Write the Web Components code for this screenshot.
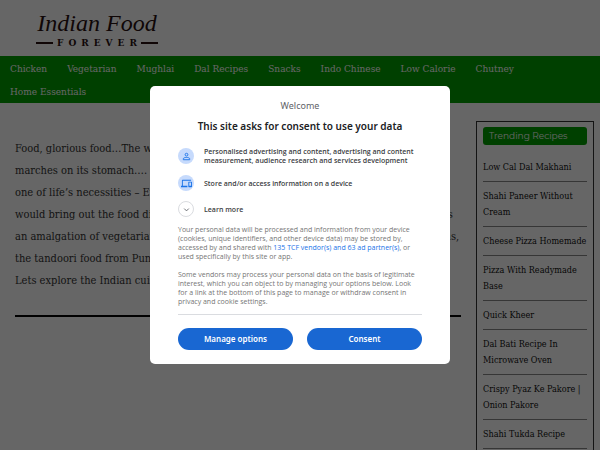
<!DOCTYPE html>
<html lang="en">
<head>
<meta charset="utf-8">
<meta name="viewport" content="width=device-width, initial-scale=1">
<title>Indian Food Forever</title>
<style>
  body {
    margin: 0;
    overflow: hidden; /* no scroll while the dialog is open */
    background: #fff;
    color: #333;
    font-family: "Roboto Slab", "DejaVu Serif Condensed", "DejaVu Serif", serif;
  }
</style>
</head>
<body>

<site-logo><span slot="name">Indian Food</span>Forever</site-logo>

<site-nav>
  <nav-item>Chicken</nav-item>
  <nav-item>Vegetarian</nav-item>
  <nav-item>Mughlai</nav-item>
  <nav-item>Dal Recipes</nav-item>
  <nav-item>Snacks</nav-item>
  <nav-item>Indo Chinese</nav-item>
  <nav-item>Low Calorie</nav-item>
  <nav-item>Chutney</nav-item>
  <nav-item>Home Essentials</nav-item>
</site-nav>

<page-layout>
  <intro-text>
    Food, glorious food…The way to a man’s heart, and an army<br>
    marches on its stomach…. Food is a passion, and it is also<br>
    one of life’s necessities – Every region and every festival<br>
    would bring out the food diversity of the country in all of its grandeur. Indian cuisine is<br>
    an amalgation of vegetarian recipes from the southern states and of the coastal regions,<br>
    the tandoori food from Punjab and the sweets of Bengal.<br>
    Lets explore the Indian cuisine with our recipes.
  </intro-text>
  <recipe-list slot="side" heading="Trending Recipes">
    <recipe-item>Low Cal Dal Makhani</recipe-item>
    <recipe-item>Shahi Paneer Without Cream</recipe-item>
    <recipe-item>Cheese Pizza Homemade</recipe-item>
    <recipe-item>Pizza With Readymade Base</recipe-item>
    <recipe-item>Quick Kheer</recipe-item>
    <recipe-item>Dal Bati Recipe In Microwave Oven</recipe-item>
    <recipe-item>Crispy Pyaz Ke Pakore | Onion Pakore</recipe-item>
    <recipe-item>Shahi Tukda Recipe</recipe-item>
  </recipe-list>
</page-layout>

<consent-dialog>
  <span slot="welcome">Welcome</span>
  <span slot="title">This site asks for consent to use your data</span>
  <consent-row icon="person">Personalised advertising and content, advertising and content measurement, audience research and services development</consent-row>
  <consent-row icon="devices">Store and/or access information on a device</consent-row>
  <consent-row icon="more">Learn more</consent-row>
  <consent-note slot="note">Your personal data will be processed and information from your device (cookies, unique identifiers, and other device data) may be stored by, accessed by and shared with <a href="#vendors">135 TCF vendor(s) and 63 ad partner(s)</a>, or used specifically by this site or app.</consent-note>
  <consent-note slot="note">Some vendors may process your personal data on the basis of legitimate interest, which you can object to by managing your options below. Look for a link at the bottom of this page to manage or withdraw consent in privacy and cookie settings.</consent-note>
  <pill-button slot="action">Manage options</pill-button>
  <pill-button slot="action">Consent</pill-button>
</consent-dialog>

<script>
// => Small helper: open shadow root with the given markup
function shadow(el, html) {
  el.attachShadow({ mode: 'open' }).innerHTML = html;
}

// **********************************************************************
// => Header

customElements.define('site-logo', class extends HTMLElement {
  constructor() {
    super();
    shadow(this, `
      <style>
        :host { display: flex; height: 56px; padding-left: 36px; color: #2a1010; }
        a { display: flex; flex-direction: column; align-items: center; width: 122px; padding-top: 8px; color: inherit; text-decoration: none; }
        .name { font: italic 24px/30px "Liberation Serif", serif; white-space: nowrap; }
        .sub { display: flex; align-items: center; gap: 4px; align-self: stretch; font: bold 9px/10px "DejaVu Serif", serif; text-transform: uppercase; letter-spacing: 5px; }
        .sub::before, .sub::after { content: ""; flex: 1; height: 2px; background: currentColor; }
        .sub::after { margin-left: -5px; }
      </style>
      <a href="#home">
        <span class="name"><slot name="name"></slot></span>
        <span class="sub"><span><slot></slot></span></span>
      </a>`);
  }
});

customElements.define('site-nav', class extends HTMLElement {
  constructor() {
    super();
    shadow(this, `
      <style>
        :host { display: block; background: #00a000; }
        nav { display: flex; flex-wrap: wrap; column-gap: 20px; padding: 1px 10px 0; }
      </style>
      <nav><slot></slot></nav>`);
  }
});

customElements.define('nav-item', class extends HTMLElement {
  constructor() {
    super();
    shadow(this, `
      <style>
        :host { display: block; font-size: 10px; line-height: 23px; }
        a { color: #fff; text-decoration: none; white-space: nowrap; }
      </style>
      <a href="#"><slot></slot></a>`);
  }
});

// **********************************************************************
// => Content and sidebar

customElements.define('page-layout', class extends HTMLElement {
  constructor() {
    super();
    shadow(this, `
      <style>
        :host { display: grid; grid-template-columns: minmax(0, 1fr) 118px; gap: 15px; align-items: start; padding: 18px 6px 0 15px; }
      </style>
      <main><slot></slot></main>
      <aside><slot name="side"></slot></aside>`);
  }
});

customElements.define('intro-text', class extends HTMLElement {
  constructor() {
    super();
    shadow(this, `
      <style>
        :host { display: block; padding-top: 17px; }
        p { margin: 0; font-size: 11px; line-height: 22px; white-space: nowrap; }
        hr { margin: 23px 0 0; border: 0; height: 2px; background: #000; }
      </style>
      <p><slot></slot></p>
      <hr>`);
  }
});

customElements.define('recipe-list', class extends HTMLElement {
  constructor() {
    super();
    shadow(this, `
      <style>
        :host { display: block; border: 1px solid #333; padding: 5px 6px; }
        h2 { margin: 0 0 8px; padding: 0 6px; border-radius: 3px; background: #00a000; color: #fff; font: 9px/18px Montserrat, Inter, sans-serif; white-space: nowrap; }
      </style>
      <h2>${this.getAttribute('heading')}</h2>
      <slot></slot>`);
  }
});

customElements.define('recipe-item', class extends HTMLElement {
  constructor() {
    super();
    shadow(this, `
      <style>
        :host { display: block; padding: 6px 0; border-bottom: 1px solid #888; font-size: 9px; line-height: 16px; }
        a { color: #111; text-decoration: none; }
      </style>
      <a href="#"><slot></slot></a>`);
  }
});

// **********************************************************************
// => Consent dialog

const icons = {
  person: '<path fill="none" stroke="#1a73e8" stroke-width="2" d="M12 5a3 3 0 1 1 0 6a3 3 0 1 1 0-6zM5 19v-2c0-2 4-3 7-3s7 1 7 3v2z"/>',
  devices: '<path fill="#1a73e8" d="M4 6h18V4H4c-1.100 0-2 .9-2 2v11H0v3h14v-3H4V6zm19 2h-6c-.55 0-1 .45-1 1v10c0 .55.45 1 1 1h6c.55 0 1-.45 1-1V9c0-.55-.45-1-1-1zm-1 9h-4v-7h4v7z"/>',
  more: '<path fill="none" stroke="#5f6368" stroke-width="2" d="M7 10l5 5l5-5"/>'
};

customElements.define('consent-dialog', class extends HTMLElement {
  constructor() {
    super();
    shadow(this, `
      <style>
        :host { position: fixed; inset: 0; display: flex; align-items: center; justify-content: center; background: rgba(0, 0, 0, .6); font-family: "Noto Sans", "Open Sans", sans-serif; color: #5f6368; }
        section { box-sizing: border-box; width: 50%; min-width: 300px; padding: 14px 28px; border-radius: 5px; background: #fff; }
        header { font-size: 9px; line-height: 12px; text-align: center; }
        h1 { margin: 6px 0 13px; font-size: 10px; line-height: 16px; font-weight: 600; text-align: center; color: #202124; white-space: nowrap; }
        .rows { display: flex; flex-direction: column; gap: 10px; margin-bottom: 8px; }
        .notes { display: flex; flex-direction: column; gap: 9px; padding-bottom: 8px; border-bottom: 1px solid #dadce0; }
        footer { display: flex; gap: 14px; padding-top: 13px; }
      </style>
      <section role="dialog" aria-modal="true" aria-labelledby="title">
        <header><slot name="welcome"></slot></header>
        <h1 id="title"><slot name="title"></slot></h1>
        <div class="rows"><slot></slot></div>
        <div class="notes"><slot name="note"></slot></div>
        <footer><slot name="action"></slot></footer>
      </section>`);
  }
});

customElements.define('consent-row', class extends HTMLElement {
  constructor() {
    super();
    const icon = this.getAttribute('icon');
    const tag = icon === 'more' ? 'button' : 'div';
    shadow(this, `
      <style>
        :host { display: block; }
        .row { display: flex; align-items: center; gap: 10px; width: 100%; padding: 0; border: 0; background: none; text-align: left; color: #3c4043; font: 600 7px/9px "Open Sans", "Noto Sans", sans-serif; }
        .icon { box-sizing: border-box; flex: none; display: flex; align-items: center; justify-content: center; width: 16px; height: 16px; border-radius: 50%; background: #c6dafc; }
        .icon.more { background: none; border: 1px solid #dadce0; }
        svg { width: 11px; height: 11px; flex: none; }
      </style>
      <${tag} class="row">
        <span class="icon ${icon}"><svg viewBox="0 0 24 24" aria-hidden="true">${icons[icon]}</svg></span>
        <span><slot></slot></span>
      </${tag}>`);
  }
});

customElements.define('consent-note', class extends HTMLElement {
  constructor() {
    super();
    shadow(this, `
      <style>
        :host { display: block; font: 7px/9px "Open Sans", "Noto Sans", sans-serif; color: #757575; }
        p { margin: 0; }
        ::slotted(a) { color: #1a73e8; text-decoration: none; }
      </style>
      <p><slot></slot></p>`);
  }
});

customElements.define('pill-button', class extends HTMLElement {
  constructor() {
    super();
    shadow(this, `
      <style>
        :host { display: block; flex: 1; }
        button { display: block; width: 100%; height: 22px; padding: 0; border: 0; border-radius: 11px; background: #1967d2; color: #fff; font: 600 8px/22px "Noto Sans", "Open Sans", sans-serif; }
      </style>
      <button type="button"><slot></slot></button>`);
  }
});
</script>
</body>
</html>
